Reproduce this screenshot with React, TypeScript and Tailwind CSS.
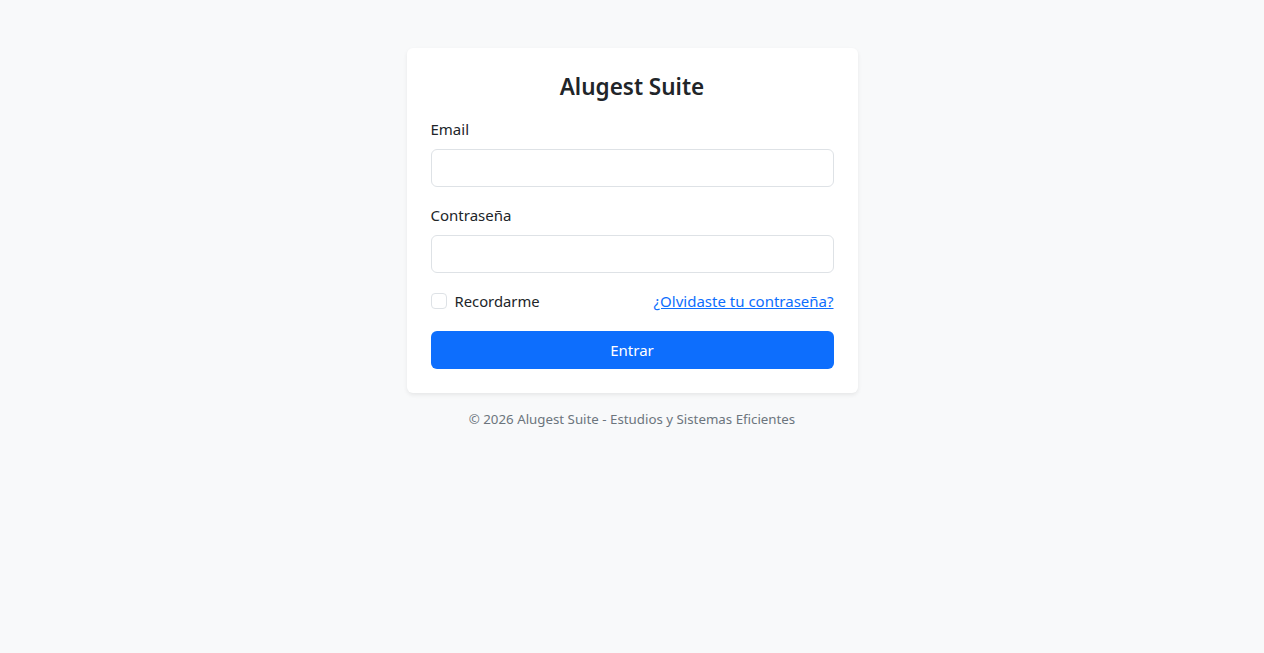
import React from "react";

export default function App() {
  return (
    <div
      className="min-h-[653px] w-full bg-[#f8f9fa] text-[#212529]"
      style={{ fontFamily: '"Noto Sans", "Open Sans", sans-serif' }}
    >
      <div className="mx-auto flex w-[451px] flex-col pt-12">
        <div className="rounded-md bg-white p-6 shadow-[0_0.125rem_0.25rem_rgba(0,0,0,0.075)]">
          <h4 className="mb-4 h-[29px] text-center text-[22.5px] font-semibold leading-[30px]">Alugest Suite</h4>
          <div className="mb-4">
            <label className="mb-2 block text-[15px] leading-6">Email</label>
            <input
              type="email"
              className="block h-[38px] w-full rounded-md border border-[#dee2e6] bg-white px-3 outline-none"
            />
          </div>
          <div className="mb-4">
            <label className="mb-2 block text-[15px] leading-6">Contraseña</label>
            <input
              type="password"
              className="block h-[38px] w-full rounded-md border border-[#dee2e6] bg-white px-3 outline-none"
            />
          </div>
          <div className="mb-[18px] flex h-6 items-center justify-between">
            <label className="flex items-center gap-2 text-[14.8px] leading-6">
              <span className="inline-block h-4 w-4 rounded-[4px] border border-[#dee2e6] bg-white" />
              Recordarme
            </label>
            <a href="#" className="text-[15px] leading-6 text-[#0d6efd] underline">
              ¿Olvidaste tu contraseña?
            </a>
          </div>
          <button className="block h-[38px] w-full rounded-md bg-[#0d6efd] text-[15px] text-white">
            Entrar
          </button>
        </div>
        <p className="mt-4 text-center text-[13.3px] leading-[21px] text-[#6c757d]">
          © 2026 Alugest Suite - Estudios y Sistemas Eficientes
        </p>
      </div>
    </div>
  );
}
